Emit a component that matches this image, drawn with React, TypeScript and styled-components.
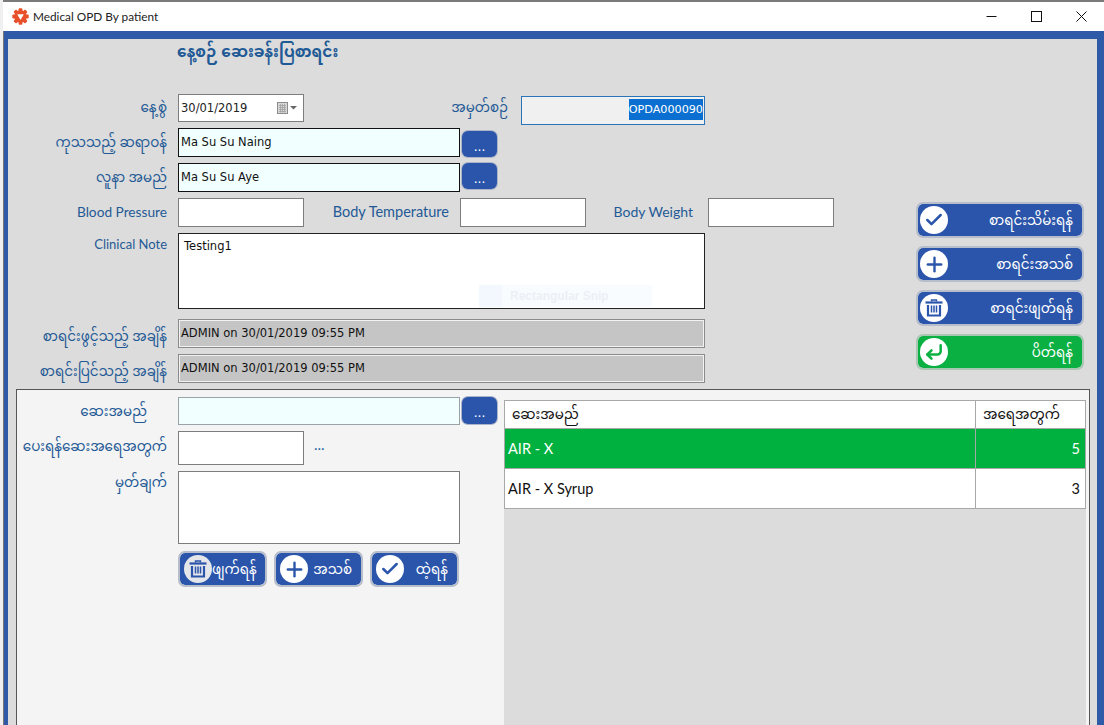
import React from 'react';
import styled, { createGlobalStyle } from 'styled-components';
import { Check, Plus, CornerDownLeft } from 'lucide-react';

const GlobalStyle = createGlobalStyle`
  html, body {
    margin: 0;
    padding: 0;
    height: 100%;
    overflow: hidden;
    background: #f0f0f0;
  }
  body {
    font-family: "Lato", "Noto Sans Myanmar", "Padauk", "DejaVu Sans", sans-serif;
    font-size: 13.5px;
    color: #111;
  }
`;

const Window = styled.div`
  width: 1104px;
  height: 725px;
  padding-left: 3px;
  box-sizing: border-box;
  overflow: hidden;
`;

const TitleBar = styled.div`
  height: 29px;
  background: #fff;
  border-top: 2px solid #7a7a7a;
  display: flex;
  align-items: center;
  padding-left: 9px;
  font-size: 11.8px;
  color: #222;
`;

const TitleText = styled.span`
  flex: 1;
  margin-left: 4px;
`;

const WinButton = styled.div`
  width: 45px;
  height: 29px;
  display: flex;
  align-items: center;
  justify-content: center;
`;

const Frame = styled.div`
  background: #2f5aa8;
  border-left: 1px solid #777;
  padding: 8px 7px 0 4px;
  height: 694px;
  box-sizing: border-box;
`;

const Content = styled.div`
  background: #dcdcdc;
  height: 686px;
  padding: 0 7px 0 8px;
  box-sizing: border-box;
`;

const Heading = styled.div`
  height: 55px;
  padding-left: 161px;
  box-sizing: border-box;
  font-size: 15.3px;
  line-height: 25px;
  font-weight: bold;
  color: #1f5a96;
`;

const Top = styled.div`
  display: flex;
  height: 289px;
`;

const Form = styled.div`
  width: 900px;
  display: flex;
  flex-direction: column;
  gap: 6px;
`;

const Row = styled.div<{ $gapTop?: number }>`
  display: flex;
  align-items: flex-start;
  margin-top: ${(p) => p.$gapTop ?? 0}px;
`;

const DateRow = styled(Row)`
  height: 28px;
`;

const Label = styled.label<{ $width?: number; $gap?: number; $size?: number; $line?: number }>`
  width: ${(p) => p.$width ?? 151}px;
  height: 28px;
  flex: none;
  margin-right: ${(p) => p.$gap ?? 11}px;
  text-align: right;
  font-size: ${(p) => p.$size ?? 13.5}px;
  line-height: ${(p) => p.$line ?? 28}px;
  color: #1f5a96;
  white-space: nowrap;
`;

type Tone = 'plain' | 'tint' | 'pale' | 'grey' | 'note';

const fieldBorder: Record<Tone, string> = {
  plain: '#7d7d7d',
  tint: '#111',
  pale: '#9aa4a8',
  grey: '#8a8a8a',
  note: '#222',
};

const Field = styled.div<{ $width: number; $height?: number; $tone?: Tone }>`
  position: relative;
  width: ${(p) => p.$width}px;
  height: ${(p) => p.$height ?? 29}px;
  flex: none;
  box-sizing: border-box;
  padding: ${(p) => (p.$tone === 'note' ? '2px 5px' : '0 2px')};
  font-family: "DejaVu Sans", sans-serif;
  font-size: 11.5px;
  line-height: ${(p) => (p.$tone === 'note' ? 20 : 26)}px;
  border: 1px solid ${(p) => fieldBorder[p.$tone ?? 'plain']};
  background: ${(p) => (p.$tone === 'tint' || p.$tone === 'pale' ? '#f2ffff' : p.$tone === 'grey' ? '#c5c5c5' : '#fff')};
  ${(p) => p.$tone === 'grey' && 'box-shadow: 0 0 0 1px #f2f2f2 inset;'}
`;

const GhostSnip = styled.div`
  position: absolute;
  left: 300px;
  top: 51px;
  width: 173px;
  height: 22px;
  display: flex;
  align-items: center;
  gap: 8px;
  background: #f9fcff;
  color: #ecf0f5;
  font-family: "Liberation Sans", sans-serif;
  font-size: 12px;
  font-weight: bold;
`;

const GhostIcon = styled.span`
  width: 23px;
  height: 22px;
  background: #f2f8fe;
`;

const DateField = styled(Field)`
  display: flex;
  align-items: center;
  justify-content: space-between;
  padding-right: 5px;
  color: #222;
`;

const SerialLabel = styled(Label)`
  width: 80px;
  margin: 0 13px 0 124px;
`;

const SerialField = styled.div`
  width: 184px;
  height: 29px;
  margin-top: 2px;
  box-sizing: border-box;
  border: 1px solid #2a74b8;
  background: #f0f0f0;
  padding: 2px 1px;
  text-align: right;
  font-family: "DejaVu Sans", sans-serif;
  font-size: 11.2px;
`;

const Selected = styled.span`
  display: inline-block;
  background: #0a6fd0;
  color: #fff;
  height: 21px;
  line-height: 21px;
`;

const DotsButton = styled.div<{ $drop?: number; $height?: number }>`
  width: 35px;
  height: ${(p) => p.$height ?? 26}px;
  margin: ${(p) => p.$drop ?? 0}px 0 0 2px;
  border-radius: 6px;
  background: #2b55ab;
  box-shadow: 0 0 0 1px #aab5c9;
  color: #fff;
  text-align: center;
  font-family: "Liberation Sans", sans-serif;
  font-size: 14px;
  line-height: 30px;
`;

const Actions = styled.div`
  width: 168px;
  margin-top: 108px;
  display: flex;
  flex-direction: column;
  gap: 8px;
`;

const ActionButton = styled.div<{ $tone?: 'blue' | 'green'; $compact?: boolean }>`
  display: flex;
  align-items: center;
  justify-content: space-between;
  box-sizing: border-box;
  width: ${(p) => (p.$compact ? '89px' : '168px')};
  height: 36px;
  padding: 0 9px 0 ${(p) => (p.$compact ? '4px' : '2px')};
  border-radius: 7px;
  border: 2px solid ${(p) => (p.$tone === 'green' ? '#a9c7b2' : '#b6bdcb')};
  background: ${(p) => (p.$tone === 'green' ? '#0bb043' : '#2b55ab')};
  background-clip: padding-box;
  color: #fff;
  font-size: 13.5px;
  white-space: nowrap;
`;

const ActionLabel = styled.span`
  padding-top: 3px;
`;

const IconDisc = styled.span<{ $tone?: 'blue' | 'green'; $muted?: boolean }>`
  width: 28px;
  height: 28px;
  flex: none;
  border-radius: 50%;
  background: ${(p) => (p.$muted ? '#e4e6ea' : '#fff')};
  color: ${(p) => (p.$tone === 'green' ? '#0bb043' : '#2b55ab')};
  display: flex;
  align-items: center;
  justify-content: center;
`;

const Panel = styled.div`
  display: flex;
  box-sizing: border-box;
  height: 336px;
  margin-top: 6px;
  border: 1px solid #555;
  border-bottom: none;
  background: #f4f4f4;
`;

const PanelForm = styled.div`
  width: 487px;
  flex: none;
  padding-top: 7px;
  display: flex;
  flex-direction: column;
  gap: 6px;
`;

const Ellipsis = styled.span`
  margin-left: 10px;
  color: #2a6aa8;
  font-size: 15px;
  line-height: 26px;
`;

const PanelButtons = styled.div`
  display: flex;
  gap: 7px;
  padding: 1px 0 0 161px;
`;

const GridArea = styled.div`
  flex: 1;
  padding: 10px 3px 0 0;
`;

const Table = styled.div`
  height: 100%;
  background: #dcdcdc;
`;

const TableBody = styled.div`
  border: 1px solid #a8a8a8;
  border-bottom: none;
`;

const TableRow = styled.div<{ $selected?: boolean; $header?: boolean }>`
  display: grid;
  grid-template-columns: 471px 109px;
  height: ${(p) => (p.$header ? '28px' : '40px')};
  line-height: ${(p) => (p.$header ? '27px' : '40px')};
  background: ${(p) => (p.$selected ? '#00b140' : '#fff')};
  color: ${(p) => (p.$selected ? '#fff' : '#111')};
  font-size: ${(p) => (p.$header ? 13.5 : 14.5)}px;
  box-sizing: border-box;
  border-bottom: 1px solid #a8a8a8;
`;

const Cell = styled.div<{ $end?: boolean; $header?: boolean }>`
  padding: 0 5px 0 ${(p) => (p.$header ? '7px' : '3px')};
  text-align: ${(p) => (p.$end ? 'right' : 'left')};
  border-right: 1px solid #a8a8a8;
  &:last-child {
    border-right: none;
  }
`;

const TrashIcon = () => (
  <svg width="20" height="20" viewBox="0 0 20 20" fill="none" stroke="currentColor">
    <path d="M7.5 3.5V2h5v1.5" strokeWidth="1.4" />
    <path d="M1.5 4.5h17" strokeWidth="2.2" />
    <path d="M4 7v10.5h12V7" strokeWidth="2.2" />
    <path d="M7.5 7.5v7M10 7.5v7M12.5 7.5v7" strokeWidth="1.5" />
  </svg>
);

const CalendarIcon = () => (
  <svg width="21" height="12" viewBox="0 0 21 12">
    <rect x="0.5" y="0.5" width="10" height="11" fill="#d8d8d8" stroke="#8c8c8c" />
    <path d="M2 3.5h7M2 5.5h7M2 7.5h7M2 9.5h7M3.5 2v8.5M5.5 2v8.5M7.5 2v8.5" stroke="#a2a2a2" strokeWidth="0.8" />
    <path d="M13 4h7l-3.500 3.500z" fill="#666" />
  </svg>
);

const teeth = [0, 45, 90, 135, 180, 225, 270, 315];

const AppLogo = () => (
  <svg width="17" height="17" viewBox="0 0 17 17">
    <circle cx="8.5" cy="8.500" r="6.200" fill="#e8502a" />
    {teeth.map((deg) => (
      <rect key={deg} x="6.600" y="0.300" width="3.800" height="4" rx="1" fill="#e8502a" transform={`rotate(${deg} 8.500 8.500)`} />
    ))}
    <path d="M5.200 6.300h6.600L8.500 12z" fill="#fff" />
  </svg>
);

const MinimizeIcon = () => (
  <svg width="11" height="11" viewBox="0 0 11 11"><path d="M0.500 5.500h10" stroke="#111" /></svg>
);

const MaximizeIcon = () => (
  <svg width="11" height="11" viewBox="0 0 11 11"><rect x="0.500" y="0.500" width="10" height="10" fill="none" stroke="#111" /></svg>
);

const CloseIcon = () => (
  <svg width="11" height="11" viewBox="0 0 11 11"><path d="M0.500 0.500l10 10M10.500 0.500l-10 10" stroke="#111" /></svg>
);

const sideActions = [
  { label: 'စာရင်းသိမ်းရန်', icon: <Check size={20} strokeWidth={3} /> },
  { label: 'စာရင်းအသစ်', icon: <Plus size={23} strokeWidth={2.5} /> },
  { label: 'စာရင်းဖျတ်ရန်', icon: <TrashIcon /> },
  { label: 'ပိတ်ရန်', icon: <CornerDownLeft size={20} strokeWidth={3} />, tone: 'green' as const },
];

const lines = [
  { medicine: 'AIR - X', qty: 5, selected: true },
  { medicine: 'AIR - X Syrup', qty: 3, selected: false },
];

const App = () => {
  return (
    <Window>
      <GlobalStyle />
      <TitleBar>
        <AppLogo />
        <TitleText>Medical OPD By patient</TitleText>
        <WinButton><MinimizeIcon /></WinButton>
        <WinButton><MaximizeIcon /></WinButton>
        <WinButton><CloseIcon /></WinButton>
      </TitleBar>
      <Frame>
        <Content>
          <Heading>နေ့စဉ် ဆေးခန်းပြစာရင်း</Heading>
          <Top>
            <Form>
              <DateRow>
                <Label $line={26}>နေ့စွဲ</Label>
                <DateField $width={126} $height={28}>
                  30/01/2019
                  <CalendarIcon />
                </DateField>
                <SerialLabel $line={26}>အမှတ်စဉ်</SerialLabel>
                <SerialField><Selected>OPDA000090</Selected></SerialField>
              </DateRow>
              <Row>
                <Label>ကုသသည့် ဆရာဝန်</Label>
                <Field $width={282} $tone="tint">Ma Su Su Naing</Field>
                <DotsButton $drop={3}>...</DotsButton>
              </Row>
              <Row>
                <Label>လူနာ အမည်</Label>
                <Field $width={282} $tone="tint">Ma Su Su Aye</Field>
                <DotsButton>...</DotsButton>
              </Row>
              <Row>
                <Label $size={13.7}>Blood Pressure</Label>
                <Field $width={126} />
                <Label $width={145} $size={14.5}>Body Temperature</Label>
                <Field $width={126} />
                <Label $width={107} $gap={15} $size={14}>Body Weight</Label>
                <Field $width={126} />
              </Row>
              <Row>
                <Label $size={13} $line={22}>Clinical Note</Label>
                <Field $width={527} $height={76} $tone="note">
                  Testing1
                  <GhostSnip><GhostIcon />Rectangular Snip</GhostSnip>
                </Field>
              </Row>
              <Row $gapTop={4}>
                <Label $line={34}>စာရင်းဖွင့်သည့် အချိန်</Label>
                <Field $width={527} $tone="grey">ADMIN on 30/01/2019 09:55 PM</Field>
              </Row>
              <Row>
                <Label $line={34}>စာရင်းပြင်သည့် အချိန်</Label>
                <Field $width={527} $tone="grey">ADMIN on 30/01/2019 09:55 PM</Field>
              </Row>
            </Form>
            <Actions>
              {sideActions.map((a) => (
                <ActionButton key={a.label} $tone={a.tone}>
                  <IconDisc $tone={a.tone}>{a.icon}</IconDisc>
                  <ActionLabel>{a.label}</ActionLabel>
                </ActionButton>
              ))}
            </Actions>
          </Top>
          <Panel>
            <PanelForm>
              <Row>
                <Label $width={130} $gap={31}>ဆေးအမည်</Label>
                <Field $width={282} $height={28} $tone="pale" />
                <DotsButton $height={27}>...</DotsButton>
              </Row>
              <Row>
                <Label $width={150} $line={30}>ပေးရန်ဆေးအရေအတွက်</Label>
                <Field $width={126} $height={34} />
                <Ellipsis>...</Ellipsis>
              </Row>
              <Row>
                <Label $width={150} $line={22}>မှတ်ချက်</Label>
                <Field $width={282} $height={73} />
              </Row>
              <PanelButtons>
                <ActionButton $compact><IconDisc $muted><TrashIcon /></IconDisc><ActionLabel>ဖျက်ရန်</ActionLabel></ActionButton>
                <ActionButton $compact><IconDisc><Plus size={23} strokeWidth={2.5} /></IconDisc><ActionLabel>အသစ်</ActionLabel></ActionButton>
                <ActionButton $compact><IconDisc><Check size={20} strokeWidth={3} /></IconDisc><ActionLabel>ထဲ့ရန်</ActionLabel></ActionButton>
              </PanelButtons>
            </PanelForm>
            <GridArea>
              <Table>
                <TableBody>
                  <TableRow $header>
                    <Cell $header>ဆေးအမည်</Cell>
                    <Cell $header>အရေအတွက်</Cell>
                  </TableRow>
                  {lines.map((line) => (
                    <TableRow key={line.medicine} $selected={line.selected}>
                      <Cell>{line.medicine}</Cell>
                      <Cell $end>{line.qty}</Cell>
                    </TableRow>
                  ))}
                </TableBody>
              </Table>
            </GridArea>
          </Panel>
        </Content>
      </Frame>
    </Window>
  );
};

export default App;
